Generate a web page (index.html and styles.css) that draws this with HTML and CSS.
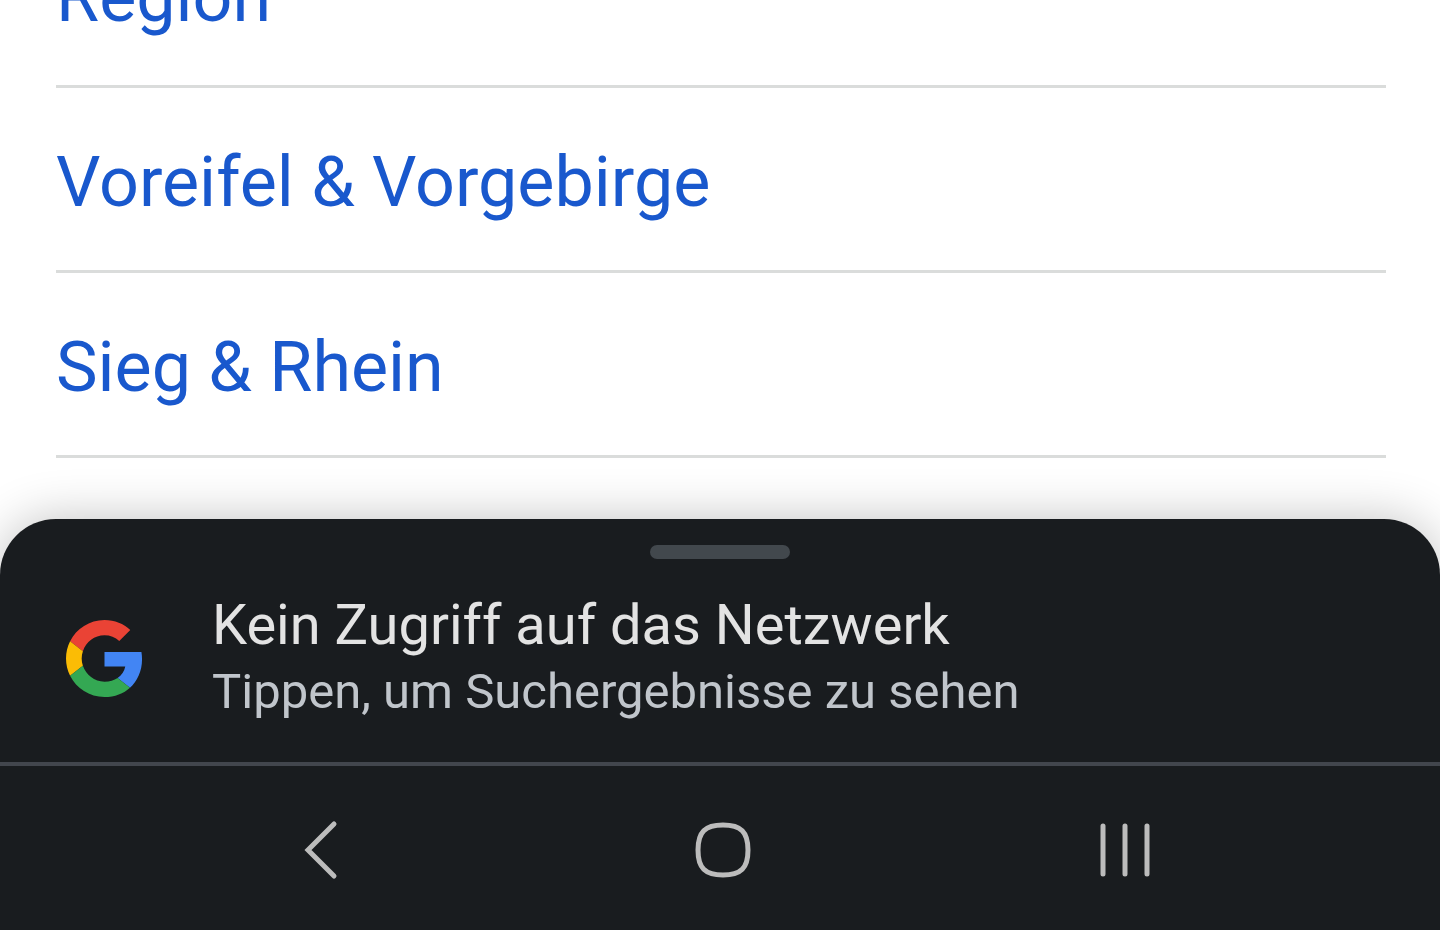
FILE: index.html
```html
<!DOCTYPE html>
<html lang="de">
<head>
<meta charset="utf-8">
<meta name="viewport" content="width=device-width, initial-scale=1">
<title>Region</title>
<link rel="stylesheet" href="styles.css">
</head>
<body>
<main class="screen">
  <nav class="links" aria-label="Region">
    <a class="link" href="#region">Region</a>
    <a class="link" href="#voreifel">Voreifel &amp; Vorgebirge</a>
    <a class="link" href="#sieg">Sieg &amp; Rhein</a>
  </nav>
  <section class="sheet">
    <div class="handle"></div>
    <a class="notice" href="#suche">
      <svg class="logo" viewBox="0 0 48 48" aria-hidden="true">
        <path fill="#ea4335" d="M24 9.5c3.54 0 6.71 1.22 9.21 3.6l6.85-6.85C35.9 2.38 30.47 0 24 0 14.62 0 6.51 5.38 2.56 13.22l7.98 6.19C12.43 13.72 17.74 9.5 24 9.5z"/>
        <path fill="#4285f4" d="M47.4 24.55c0-1.57-.15-3.09-.38-4.55H24v9.02h12.94c-.58 2.96-2.26 5.48-4.78 7.18l7.73 6c4.51-4.18 7.51-10.36 7.51-17.65z"/>
        <path fill="#fbbc05" d="M10.53 28.59c-.48-1.45-.76-2.99-.76-4.59s.27-3.14.76-4.59l-7.98-6.19C.92 16.46 0 20.12 0 24c0 3.88.92 7.54 2.56 10.78l7.97-6.19z"/>
        <path fill="#34a853" d="M24 48c6.48 0 11.93-2.13 15.89-5.81l-7.73-6c-2.15 1.45-4.92 2.3-8.16 2.3-6.26 0-11.57-4.22-13.47-9.91l-7.98 6.19C6.51 42.62 14.62 48 24 48z"/>
      </svg>
      <span class="copy">
        <span class="title">Kein Zugriff auf das Netzwerk</span>
        <span class="subtitle">Tippen, um Suchergebnisse zu sehen</span>
      </span>
    </a>
    <div class="navbar">
      <button class="nav-button" type="button" aria-label="Zurück">
        <svg class="nav-icon" viewBox="0 0 60 60"><path d="M43 4 17 30l26 26"/></svg>
      </button>
      <button class="nav-button" type="button" aria-label="Startseite">
        <svg class="nav-icon" viewBox="0 0 60 60"><path d="M30 5C48 5 55 12 55 30S48 55 30 55 5 48 5 30 12 5 30 5z"/></svg>
      </button>
      <button class="nav-button" type="button" aria-label="Letzte Apps">
        <svg class="nav-icon" viewBox="0 0 60 60"><path d="M9 6v48M31 6v48M53 6v48"/></svg>
      </button>
    </div>
  </section>
</main>
</body>
</html>
```
FILE: styles.css
```css
* { box-sizing: border-box; }
body { margin: 0; background: #fff; }
.screen { height: 100vh; display: flex; flex-direction: column; justify-content: flex-end; overflow: hidden; }
.links { flex: none; display: flex; flex-direction: column; margin: 0 54px 61px 56px; }
.link { padding: 52px 0 45px; border-bottom: 3px solid #dadcdb; color: #1958cd; font: 70px/85px Roboto, sans-serif; text-decoration: none; }
.sheet { flex: none; padding-top: 26px; background: #191c1f; border-radius: 56px 56px 0 0; box-shadow: 0 0 50px rgba(0, 0, 0, .24); }
.handle { width: 140px; height: 14px; margin: 0 auto; border-radius: 7px; background: #42484d; }
.notice { display: flex; align-items: center; gap: 69px; height: 207px; padding: 0 66px 5px; border-bottom: 4px solid #42464d; text-decoration: none; }
.logo { width: 77px; height: 77px; flex: none; }
.copy { display: flex; flex-direction: column; }
.title { color: #e3e3e3; font: 400 56px/68px Roboto, sans-serif; }
.subtitle { color: #c0c5cb; font: 400 49px/66px Roboto, sans-serif; }
.navbar { display: flex; height: 164px; padding: 4px 115px 0 120px; }
.nav-button { flex: 1; display: flex; align-items: center; justify-content: center; border: 0; padding: 0; background: none; }
.nav-icon { width: 60px; height: 60px; fill: none; stroke: #bcbcbc; stroke-width: 5; stroke-linecap: round; }
```
